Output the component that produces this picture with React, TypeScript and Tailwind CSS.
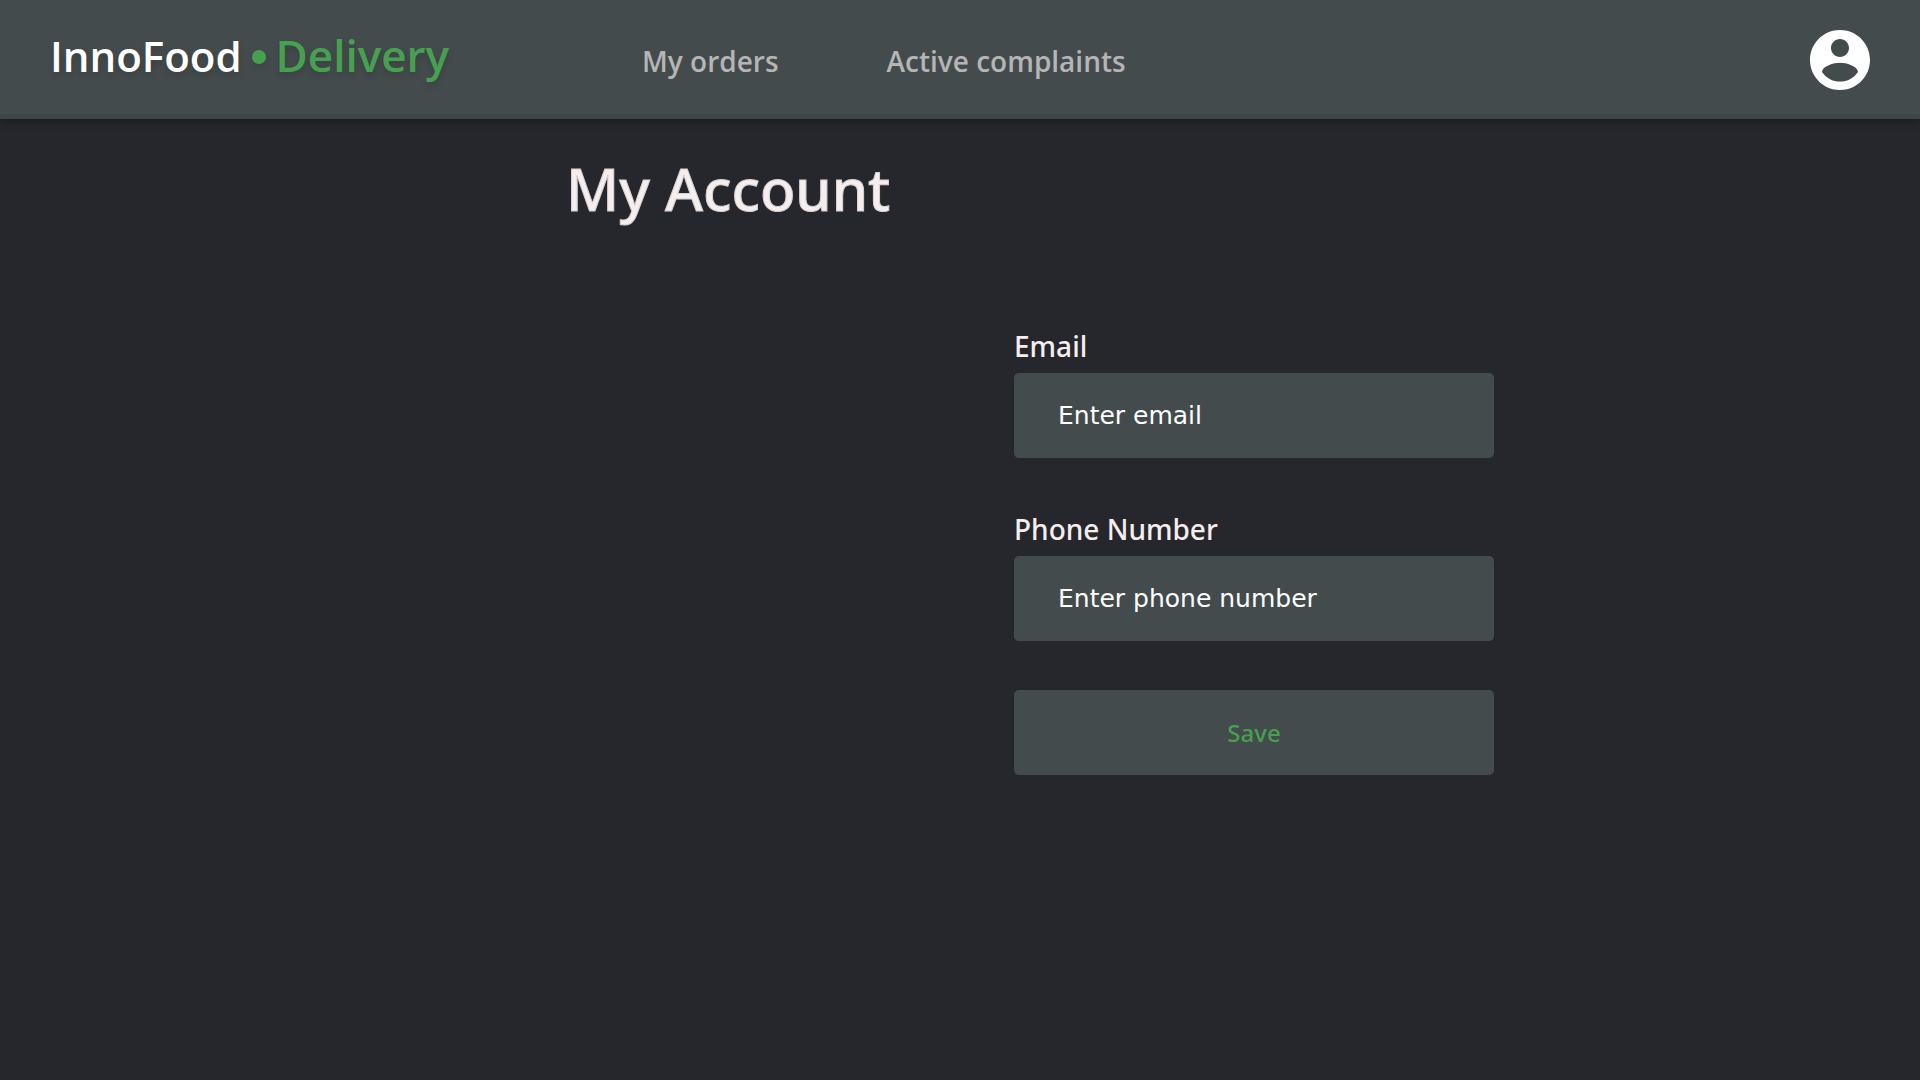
export default function App() {
  return (
    <div className="min-h-screen bg-[#26272c] font-['Noto_Sans',sans-serif] text-[#f5eeee]">
      <header className="flex h-[119px] items-center bg-[#444b4d] px-[50px] shadow-[inset_0_-5px_0_#404648,0_2px_8px_rgba(0,0,0,0.35)]">
        <a
          href="#"
          className="mb-2.5 flex w-[592px] items-baseline font-['Open_Sans',sans-serif] text-[44px] font-semibold whitespace-nowrap [text-shadow:0_4px_6px_rgba(0,0,0,0.15)]"
        >
          <span className="text-[42px] text-white">InnoFood</span>
          <span className="mx-2.5 mt-1 size-3.5 self-center rounded-full bg-[#47a050] shadow-[0_4px_6px_rgba(0,0,0,0.1)]" />
          <span className="text-[#47a050]">Delivery</span>
        </a>
        <nav className="flex flex-1 gap-[108px] pt-[2px] font-['Open_Sans',sans-serif] text-[28px] font-semibold text-[#b5b5b5]">
          <a href="#">My orders</a>
          <a href="#">Active complaints</a>
        </nav>
        <button type="button" aria-label="Account">
          <svg viewBox="2 2 20 20" className="size-[60px]" fill="#fff">
            <path d="M12 2C6.48 2 2 6.48 2 12s4.48 10 10 10 10-4.48 10-10S17.52 2 12 2zm0 3c1.66 0 3 1.34 3 3s-1.34 3-3 3-3-1.34-3-3 1.34-3 3-3zm0 14.2c-2.5 0-4.71-1.28-6-3.22.03-1.99 4-3.08 6-3.08 1.99 0 5.97 1.09 6 3.08-1.29 1.94-3.5 3.22-6 3.22z" />
          </svg>
        </button>
      </header>
      <main className="px-[566px] pt-[30px]">
        <h1 className="text-[58px] leading-[80px] font-medium whitespace-nowrap [-webkit-text-stroke:1px_#d8d0d0]">My Account</h1>
        <form className="ml-[448px] w-[480px] pt-24">
          <label htmlFor="email" className="mb-1.5 block text-[28px] leading-[42px] font-medium">Email</label>
          <input
            id="email"
            type="email"
            placeholder="Enter email"
            className="block h-[85px] w-full rounded-[5px] bg-[#444b4d] px-11 font-['DejaVu_Sans',sans-serif] text-[25px] text-white placeholder:text-white"
          />
          <label htmlFor="phone" className="mt-[50px] mb-1.5 block text-[28px] leading-[42px] font-medium">Phone Number</label>
          <input
            id="phone"
            type="tel"
            placeholder="Enter phone number"
            className="block h-[85px] w-full rounded-[5px] bg-[#444b4d] px-11 font-['DejaVu_Sans',sans-serif] text-[25px] text-white placeholder:text-white"
          />
          <button type="button" className="mt-[49px] block h-[85px] w-full rounded-[5px] bg-[#444b4d] text-[24px] font-medium text-[#47a050]">
            Save
          </button>
        </form>
      </main>
    </div>
  );
}
